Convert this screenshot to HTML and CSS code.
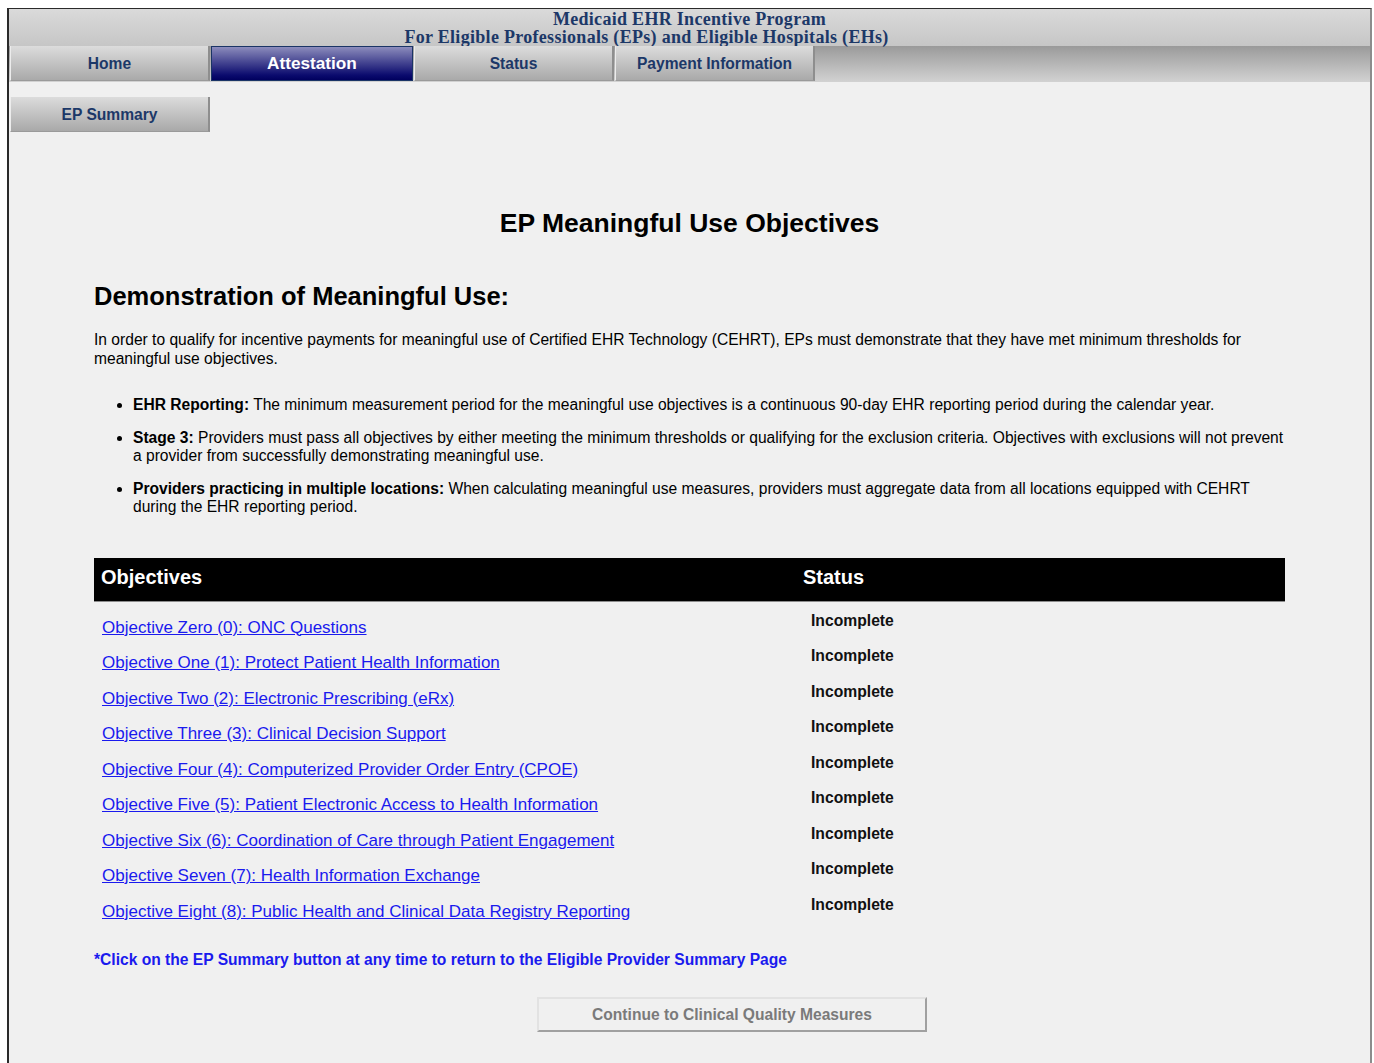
FILE: index.html
```html
<!DOCTYPE html>
<html lang="en">
<head>
<meta charset="utf-8">
<title>EP Meaningful Use Objectives</title>
<link rel="stylesheet" href="styles.css">
</head>
<body>
<div class="frame">
  <header class="banner">
    <div class="banner-line">Medicaid EHR Incentive Program</div>
    <div class="banner-line banner-sub">For Eligible Professionals (EPs) and Eligible Hospitals (EHs)</div>
  </header>
  <nav class="tabs">
    <a class="tab">Home</a>
    <a class="tab tab-active">Attestation</a>
    <a class="tab">Status</a>
    <a class="tab">Payment Information</a>
  </nav>
  <div class="subnav">
    <a class="tab tab-sub">EP Summary</a>
  </div>

  <main class="content">
    <h1 class="page-title">EP Meaningful Use Objectives</h1>
    <h2 class="section-title">Demonstration of Meaningful Use:</h2>
    <p class="intro">In order to qualify for incentive payments for meaningful use of Certified EHR Technology (CEHRT), EPs must demonstrate that they have met minimum thresholds for meaningful use objectives.</p>
    <ul class="rules">
      <li><b>EHR Reporting:</b> The minimum measurement period for the meaningful use objectives is a continuous 90-day EHR reporting period during the calendar year.</li>
      <li><b>Stage 3:</b> Providers must pass all objectives by either meeting the minimum thresholds or qualifying for the exclusion criteria. Objectives with exclusions will not prevent a provider from successfully demonstrating meaningful use.</li>
      <li><b>Providers practicing in multiple locations:</b> When calculating meaningful use measures, providers must aggregate data from all locations equipped with CEHRT during the EHR reporting period.</li>
    </ul>

    <div class="objectives">
      <div class="obj-head">
        <div class="obj-head-name">Objectives</div>
        <div class="obj-head-status">Status</div>
      </div>
      <div class="obj-row"><a class="obj-link" href="#">Objective Zero (0): ONC Questions</a><span class="obj-status">Incomplete</span></div>
      <div class="obj-row"><a class="obj-link" href="#">Objective One (1): Protect Patient Health Information</a><span class="obj-status">Incomplete</span></div>
      <div class="obj-row"><a class="obj-link" href="#">Objective Two (2): Electronic Prescribing (eRx)</a><span class="obj-status">Incomplete</span></div>
      <div class="obj-row"><a class="obj-link" href="#">Objective Three (3): Clinical Decision Support</a><span class="obj-status">Incomplete</span></div>
      <div class="obj-row"><a class="obj-link" href="#">Objective Four (4): Computerized Provider Order Entry (CPOE)</a><span class="obj-status">Incomplete</span></div>
      <div class="obj-row"><a class="obj-link" href="#">Objective Five (5): Patient Electronic Access to Health Information</a><span class="obj-status">Incomplete</span></div>
      <div class="obj-row"><a class="obj-link" href="#">Objective Six (6): Coordination of Care through Patient Engagement</a><span class="obj-status">Incomplete</span></div>
      <div class="obj-row"><a class="obj-link" href="#">Objective Seven (7): Health Information Exchange</a><span class="obj-status">Incomplete</span></div>
      <div class="obj-row"><a class="obj-link" href="#">Objective Eight (8): Public Health and Clinical Data Registry Reporting</a><span class="obj-status">Incomplete</span></div>
    </div>

    <p class="note">*Click on the EP Summary button at any time to return to the Eligible Provider Summary Page</p>
    <div class="actions">
      <button class="continue" type="button" disabled>Continue to Clinical Quality Measures</button>
    </div>
  </main>
</div>
</body>
</html>
```
FILE: styles.css
```css
html, body {
  margin: 0;
  padding: 0;
  background: #ffffff;
}

body {
  font-family: "Liberation Sans", Arial, sans-serif;
  color: #000;
}

.frame {
  margin: 8px 2px 0 7px;
  border-top: 1px solid #2a2a2a;
  border-left: 2px solid #2a2a2a;
  border-right: 2px solid #8c8c8c;
  background: #f0f0f0;
  min-height: 1100px;
}

/* program banner */
.banner {
  height: 37px;
  box-sizing: border-box;
  padding-top: 1px;
  background: linear-gradient(#dadada, #c6c6c6);
  text-align: center;
  font-family: "Liberation Serif", "Times New Roman", serif;
  font-weight: bold;
  font-size: 18px;
  letter-spacing: 0.3px;
  line-height: 18px;
  color: #1c3868;
}

.banner-sub {
  padding-right: 86px;
}

/* main tab strip */
.tabs {
  display: flex;
  gap: 1px;
  height: 36px;
  padding-left: 1px;
  background: linear-gradient(#9a9a9a, #d2d2d2);
}

.tab {
  display: flex;
  align-items: center;
  justify-content: center;
  width: 200px;
  height: 35px;
  box-sizing: border-box;
  padding-top: 2px;
  border-left: 1px solid #ececec;
  border-right: 2px solid #8e8e8e;
  border-bottom: 1px solid #9a9a9a;
  background: linear-gradient(#dcdcdc, #a9a9a9);
  color: #1c3868;
  font-weight: bold;
  font-size: 15.6px;
  text-decoration: none;
}

.tab-active {
  width: 202px;
  padding-top: 0;
  border: 1px solid #1a3466;
  background: linear-gradient(#8c8cbc, #0b0b6e 85%, #00005e);
  color: #ffffff;
  font-size: 17.2px;
}

.subnav {
  padding: 15px 0 0 1px;
}

.tab-sub {
  width: 200px;
  height: 35px;
}

/* page body */
.content {
  margin: 0 85px 0 85px;
}

.page-title {
  margin: 76px 0 0;
  text-align: center;
  font-size: 26.5px;
  line-height: 30px;
  font-weight: bold;
}

.section-title {
  margin: 44px 0 0;
  font-size: 25.5px;
  line-height: 29px;
  font-weight: bold;
}

.intro {
  margin: 19px 0 0;
  font-size: 15.6px;
  line-height: 19px;
}

.rules {
  margin: 28px 0 0;
  padding-left: 39px;
  font-size: 15.6px;
  line-height: 18.5px;
}

.rules li {
  margin-bottom: 14px;
}

/* objectives list */
.objectives {
  margin-top: 41px;
}

.obj-head {
  display: grid;
  grid-template-columns: 702px 1fr;
  height: 44px;
  box-sizing: border-box;
  padding-bottom: 3px;
  align-items: center;
  background: #000;
  border-bottom: 1px solid #8c8c8c;
  color: #fff;
  font-weight: bold;
  font-size: 20px;
}

.obj-head-name { padding-left: 7px; }
.obj-head-status { padding-left: 7px; }

.obj-row {
  display: grid;
  grid-template-columns: 702px 1fr;
  align-items: start;
  height: 35.5px;
}

.obj-link {
  justify-self: start;
  margin: 16px 0 0 8px;
  font-size: 17px;
  line-height: 20px;
  color: #1a1aee;
  text-decoration: underline;
}

.obj-status {
  margin: 10px 0 0 15px;
  font-size: 15.7px;
  line-height: 18px;
  font-weight: bold;
  color: #111;
}

.note {
  margin: 30px 0 0;
  font-size: 15.6px;
  line-height: 18px;
  font-weight: bold;
  color: #1a1aee;
}

.actions {
  display: flex;
  justify-content: center;
  margin-top: 28px;
  padding-left: 85px;
}

.continue {
  width: 390px;
  height: 35px;
  box-sizing: border-box;
  background: #f0f0f0;
  border-top: 2px solid #e2e2e2;
  border-left: 2px solid #e2e2e2;
  border-right: 2px solid #a0a0a0;
  border-bottom: 2px solid #a0a0a0;
  font-family: "Liberation Sans", Arial, sans-serif;
  font-size: 15.6px;
  font-weight: bold;
  color: #7a7a7a;
  padding: 0;
}
```
